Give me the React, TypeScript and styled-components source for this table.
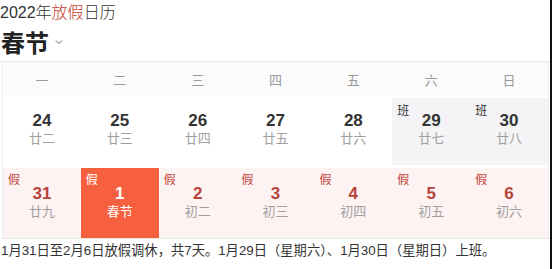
import styled, { createGlobalStyle } from 'styled-components';

const GlobalStyle = createGlobalStyle`
  html, body {
    margin: 0;
    padding: 0;
    background: #fff;
  }
  body {
    font-family: "Liberation Sans", "Noto Sans CJK SC", sans-serif;
    color: #333;
  }
`;

const Page = styled.div`
  width: 550px;
  height: 269px;
  border-right: 2px solid #111;
  overflow: hidden;
`;

const Title = styled.div`
  font-size: 16px;
  line-height: 20px;
  padding-top: 3px;
  color: #333;
  font-weight: 300;
`;

const Red = styled.span`
  color: #c23a2f;
`;

const Heading = styled.div`
  display: flex;
  align-items: center;
  gap: 6px;
  height: 37px;
  padding-left: 1px;
  padding-bottom: 1px;
  font-size: 24px;
  font-weight: 700;
  color: #222;
  border-bottom: 1px solid #e6e6e6;
`;

const Chevron = styled.svg`
  width: 8px;
  height: 6px;
  margin-top: 0px;
`;

const Calendar = styled.div`
  margin-left: 2px;
  width: 545px;
  display: grid;
  grid-template-columns: repeat(7, 1fr);
  border-left: 1px solid #ececec;
  border-right: 1px solid #ececec;
  border-bottom: 1px solid #e6e6e6;
`;

const WeekDay = styled.div`
  height: 34px;
  display: flex;
  align-items: center;
  justify-content: center;
  background: #fbfbfc;
  color: #999;
  font-size: 13px;
`;

type Kind = 'normal' | 'work' | 'holiday' | 'today';

const backgrounds: Record<Kind, string> = {
  normal: '#fff',
  work: 'linear-gradient(#f4f4f6, #f4f4f6) 0 2px / 100% calc(100% - 5px) no-repeat #fff',
  holiday: '#fdf3f2',
  today: '#f7603f',
};

const Cell = styled.div<{ $kind: Kind }>`
  position: relative;
  box-sizing: border-box;
  height: ${({ $kind }) => ($kind === 'normal' || $kind === 'work' ? '72px' : '70px')};
  padding-bottom: ${({ $kind }) => ($kind === 'normal' || $kind === 'work' ? '5px' : '2px')};
  display: flex;
  flex-direction: column;
  align-items: center;
  justify-content: center;
  gap: 1px;
  background: ${({ $kind }) => backgrounds[$kind]};
`;

const Num = styled.div<{ $kind: Kind }>`
  font-size: 17px;
  line-height: 18px;
  font-weight: 700;
  color: ${({ $kind }) => ($kind === 'holiday' ? '#b8433a' : $kind === 'today' ? '#fff' : '#333')};
`;

const Lunar = styled.div<{ $kind: Kind }>`
  font-size: 13px;
  line-height: 16px;
  color: ${({ $kind }) => ($kind === 'today' ? '#fff' : '#a0a0a0')};
`;

const Tag = styled.span<{ $kind: Kind }>`
  position: absolute;
  left: 5px;
  top: ${({ $kind }) => ($kind === 'work' ? '8px' : '5px')};
  font-size: 12px;
  line-height: 14px;
  color: ${({ $kind }) => ($kind === 'today' ? '#fff' : $kind === 'work' ? '#333' : '#c2473d')};
`;

const Note = styled.div`
  font-size: 13.3px;
  line-height: 18px;
  padding-top: 3px;
  padding-left: 1px;
  color: #333;
`;

const weekdays = ['一', '二', '三', '四', '五', '六', '日'];

type Day = { n: number; lunar: string; kind: Kind };

const days: Day[] = [
  { n: 24, lunar: '廿二', kind: 'normal' },
  { n: 25, lunar: '廿三', kind: 'normal' },
  { n: 26, lunar: '廿四', kind: 'normal' },
  { n: 27, lunar: '廿五', kind: 'normal' },
  { n: 28, lunar: '廿六', kind: 'normal' },
  { n: 29, lunar: '廿七', kind: 'work' },
  { n: 30, lunar: '廿八', kind: 'work' },
  { n: 31, lunar: '廿九', kind: 'holiday' },
  { n: 1, lunar: '春节', kind: 'today' },
  { n: 2, lunar: '初二', kind: 'holiday' },
  { n: 3, lunar: '初三', kind: 'holiday' },
  { n: 4, lunar: '初四', kind: 'holiday' },
  { n: 5, lunar: '初五', kind: 'holiday' },
  { n: 6, lunar: '初六', kind: 'holiday' },
];

const tagText: Record<Kind, string> = { normal: '', work: '班', holiday: '假', today: '假' };

export default function App() {
  return (
    <Page>
      <GlobalStyle />
      <Title>
        2022年<Red>放假</Red>日历
      </Title>
      <Heading>
        春节
        <Chevron viewBox="0 0 8 6">
          <path d="M1 1.5 L4 4.5 L7 1.5" fill="none" stroke="#666" strokeWidth="1" />
        </Chevron>
      </Heading>
      <Calendar>
        {weekdays.map((w) => (
          <WeekDay key={w}>{w}</WeekDay>
        ))}
        {days.map((d) => (
          <Cell key={d.n} $kind={d.kind}>
            {tagText[d.kind] && <Tag $kind={d.kind}>{tagText[d.kind]}</Tag>}
            <Num $kind={d.kind}>{d.n}</Num>
            <Lunar $kind={d.kind}>{d.lunar}</Lunar>
          </Cell>
        ))}
      </Calendar>
      <Note>1月31日至2月6日放假调休，共7天。1月29日（星期六）、1月30日（星期日）上班。</Note>
    </Page>
  );
}
